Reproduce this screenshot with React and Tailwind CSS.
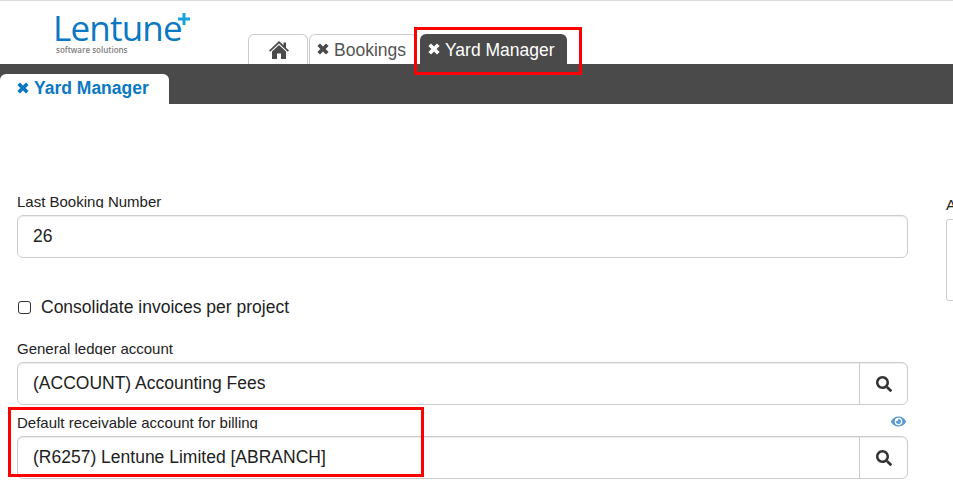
import React from "react";
import { FaSearch, FaEye } from "react-icons/fa";

function XIcon({ className }) {
  return (
    <svg className={className} width="12" height="12" viewBox="0 0 12 12" fill="currentColor">
      <path d="M3 0.4 6 3.4 9 0.4 11.6 3 8.6 6 11.6 9 9 11.6 6 8.6 3 11.6 0.4 9 3.4 6 0.4 3z" />
    </svg>
  );
}

function HomeIcon() {
  return (
    <svg width="20" height="18" viewBox="0 0 20 18" fill="currentColor">
      <path d="M10 0 14.5 4.3V1.5H17V6.7L20 9.6 18.8 10.8 10 2.6 1.2 10.8 0 9.6z" />
      <path d="M10 4 17 10.5V18H12V12.5H8V18H3V10.5z" />
    </svg>
  );
}

function Field({ label, value, search, eye, mt }) {
  return (
    <div className={mt}>
      <div className="flex justify-between items-start h-[15px] overflow-hidden text-[15px] leading-[18px] text-[#222] pr-[2px]">
        <span>{label}</span>
        {eye && <FaEye className="text-[#5b9bd5] w-[15px] h-[15px]" />}
      </div>
      <div className="mt-[7px] flex h-[43px] rounded-[6px] border border-[#ccc] bg-white shadow-[inset_0_1px_1px_rgba(0,0,0,0.075)]">
        <div className="flex-1 pl-[15px] text-[17.5px] leading-[40px] text-[#222]">{value}</div>
        {search && (
          <div className="w-[48px] border-l border-[#ccc] flex items-center justify-center">
            <FaSearch className="w-[16px] h-[16px] text-[#333]" />
          </div>
        )}
      </div>
    </div>
  );
}

export default function App() {
  return (
    <div className="relative w-[953px] h-[488px] overflow-hidden bg-white font-['Liberation_Sans',Arial,sans-serif]">
      <div className="h-[64px] border-t border-[#ddd] flex items-end">
        <div className="relative w-[248px] h-full shrink-0">
          <div className="absolute left-[53px] top-[10px] text-[#0a78c2] text-[35px] leading-[34px] tracking-[-0.8px] font-['Open_Sans',sans-serif]">Lentune</div>
          <div className="absolute left-[56px] top-[44px] text-[#808080] text-[8px] leading-[9px] font-['Open_Sans',sans-serif] font-semibold">software solutions</div>
          <svg className="absolute left-[178px] top-[12px]" width="12" height="12" viewBox="0 0 12 12">
            <path d="M4.5 0h3v4.5H12v3H7.5V12h-3V7.5H0v-3h4.5z" fill="#19a3dc" />
          </svg>
        </div>
        <div className="flex items-end gap-[1px] h-[30px] text-[17.5px]">
          <div className="w-[60px] h-[30px] rounded-t-[6px] border border-b-0 border-[#ccc] flex items-center justify-center pl-[2px] text-[#4a4a4a]">
            <HomeIcon />
          </div>
          <div className="w-[108px] h-[30px] rounded-t-[6px] border border-b-0 border-[#ccc] flex items-center pl-[7px] gap-[5px] text-[#555] pt-[2px]">
            <XIcon className="text-[#4a4a4a] -mt-[3px]" />
            <span>Bookings</span>
          </div>
          <div className="ml-[2px] w-[147px] h-[30px] rounded-t-[6px] bg-[#4a4a4a] flex items-center pl-[8px] gap-[5px] text-white pt-[2px]">
            <XIcon className="-mt-[3px]" />
            <span>Yard Manager</span>
          </div>
        </div>
      </div>

      <div className="h-[40px] bg-[#4a4a4a] flex items-end">
        <div className="w-[169px] h-[30px] rounded-t-[6px] bg-white flex items-center pl-[17px] gap-[5px] text-[#0a78c2] text-[17.5px] font-bold leading-none -mt-[2px] pb-[1px]">
          <XIcon className="-mt-[2px]" />
          <span>Yard Manager</span>
        </div>
      </div>

      <div className="flex pl-[17px] pt-[89px]">
        <div className="w-[891px] shrink-0">
          <Field label="Last Booking Number" value="26" />
          <label className="mt-[39px] flex items-center gap-[10px] text-[17.5px] leading-[20px] text-[#222]">
            <span className="ml-[1px] w-[13px] h-[13px] rounded-[3px] border border-[#333] bg-white" />
            Consolidate invoices per project
          </label>
          <Field mt="mt-[23px]" label="General ledger account" value="(ACCOUNT) Accounting Fees" search />
          <Field mt="mt-[9px]" label="Default receivable account for billing" value="(R6257) Lentune Limited [ABRANCH]" search eye />
        </div>
        <div className="ml-[38px] shrink-0 w-[40px]">
          <div className="text-[15px] leading-[16px] text-[#222] h-[16px] mt-[4px]">A</div>
          <div className="mt-[6px] w-[40px] h-[82px] rounded-[3px] border border-[#ccc] bg-white" />
        </div>
      </div>

      <div className="absolute left-[414px] top-[27px] w-[168px] h-[48px] border-[3px] border-[#f00]" />
      <div className="absolute left-[8px] top-[407px] w-[416px] h-[70px] border-[3px] border-[#f00]" />
    </div>
  );
}
